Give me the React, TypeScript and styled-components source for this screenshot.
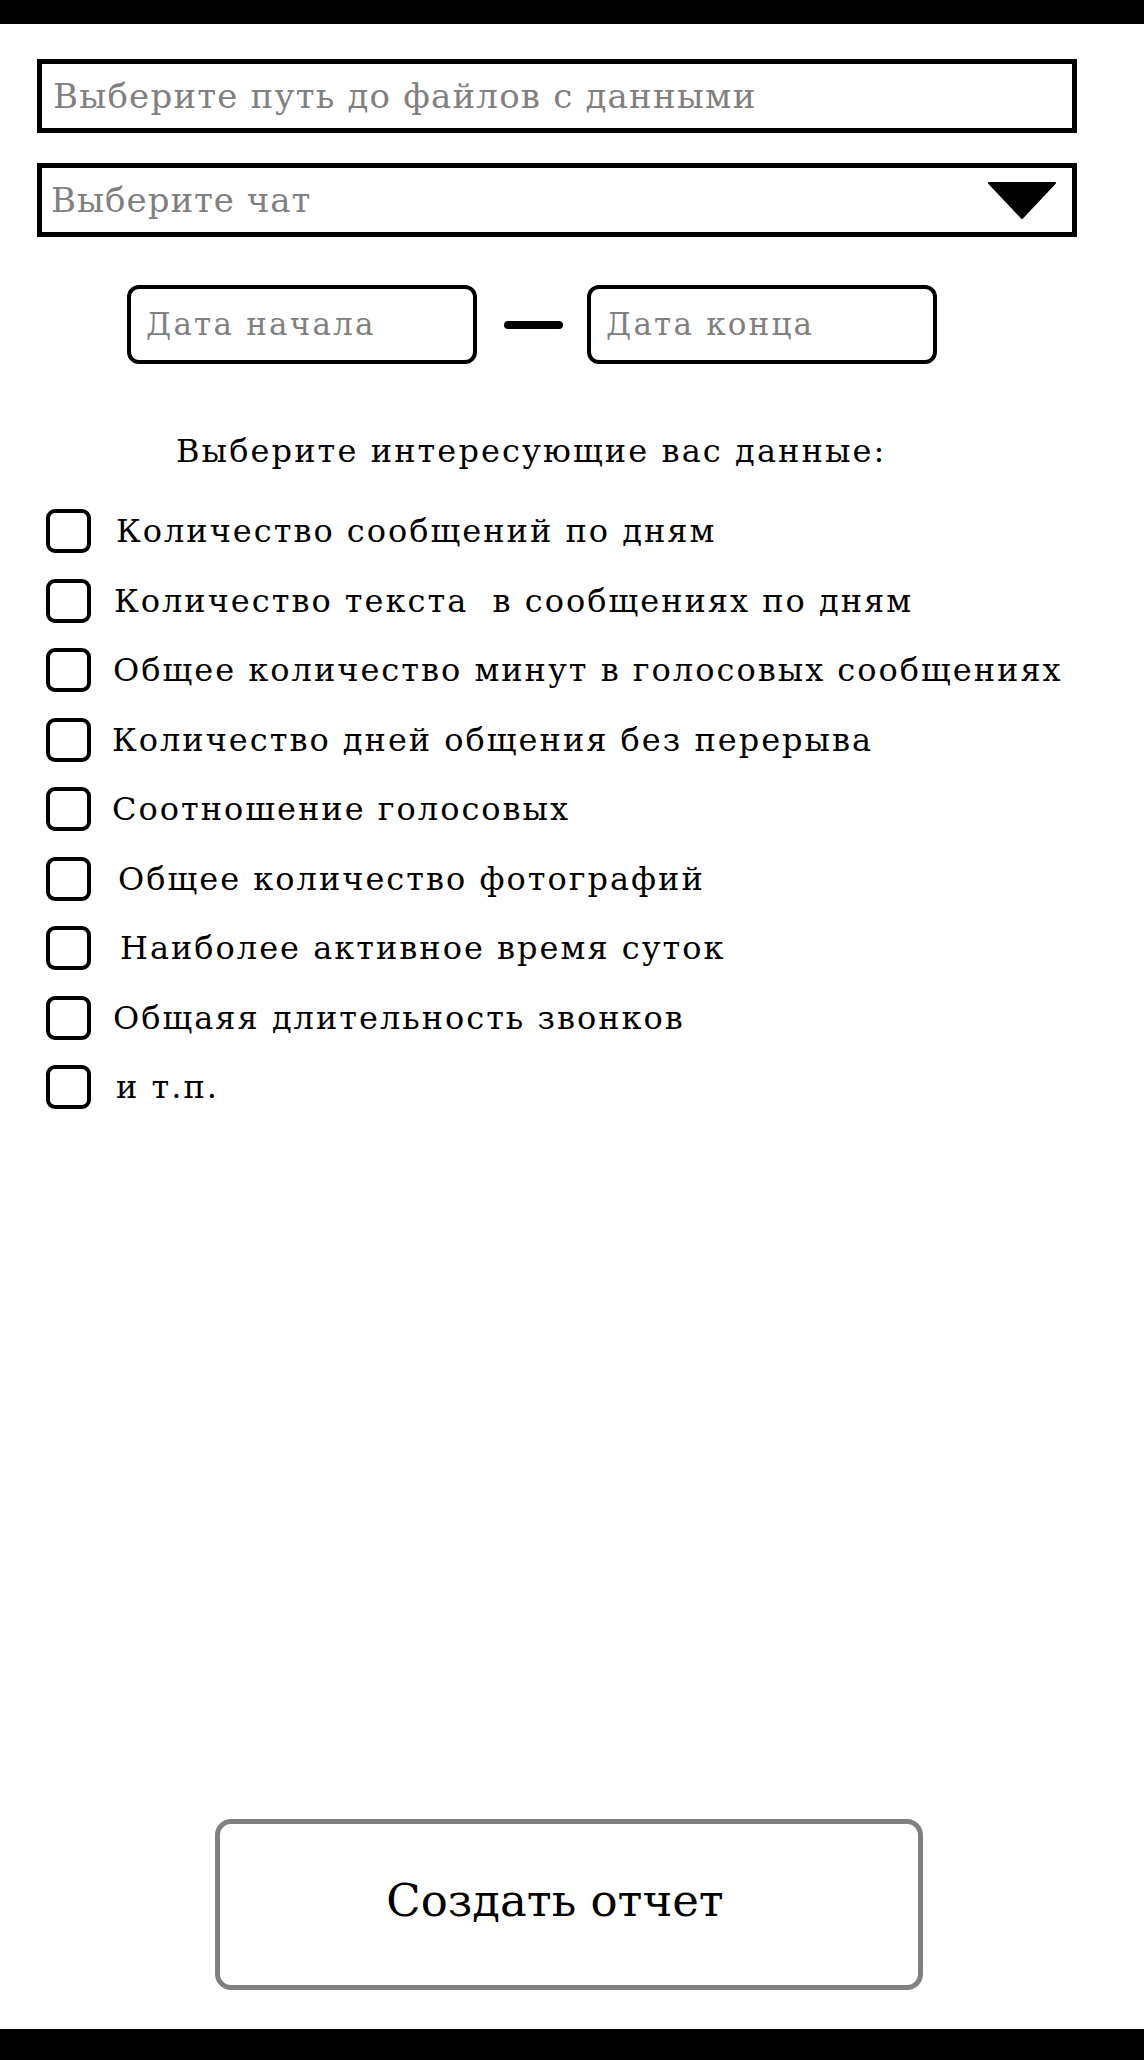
import React from "react";
import styled, { createGlobalStyle } from "styled-components";

const GlobalStyle = createGlobalStyle`
  html, body {
    margin: 0;
    padding: 0;
    background: #ffffff;
  }
  body {
    font-family: "DejaVu Serif", "Liberation Serif", serif;
    color: #000;
  }
  * { box-sizing: border-box; }
`;

const Page = styled.div`
  display: flex;
  flex-direction: column;
  height: 100vh;
`;

const Bar = styled.div<{ $h: number }>`
  flex: 0 0 ${(p) => p.$h}px;
  background: #000;
`;

const Main = styled.main`
  flex: 1;
  display: flex;
  flex-direction: column;
  padding: 35px 67px 0 37px;
`;

const PathInput = styled.input`
  display: block;
  width: 100%;
  height: 74px;
  border: 5px solid #000;
  border-radius: 0;
  padding: 0 11px;
  font-family: "DejaVu Serif", serif;
  font-size: 34px;
  letter-spacing: 1.2px;
  color: #000;
  outline: none;
  &::placeholder {
    color: #808080;
  }
`;

const SelectBox = styled.div`
  margin-top: 30px;
  height: 74px;
  border: 5px solid #000;
  display: flex;
  align-items: center;
  justify-content: space-between;
  padding: 0 16px 0 9px;
`;

const Placeholder = styled.span`
  font-size: 34px;
  letter-spacing: 1px;
  color: #808080;
`;

const DateRow = styled.div`
  margin-top: 48px;
  margin-left: 90px;
  display: flex;
  align-items: center;
`;

const DateInput = styled.input`
  width: 350px;
  height: 79px;
  border: 4px solid #000;
  border-radius: 12px;
  padding: 0 15px 2px;
  font-family: "DejaVu Serif", serif;
  font-size: 31px;
  letter-spacing: 2.2px;
  outline: none;
  &::placeholder {
    color: #808080;
  }
`;

const Dash = styled.span`
  width: 59px;
  height: 8px;
  border-radius: 4px;
  background: #000;
  margin: 0 24px 0 27px;
`;

const Heading = styled.div`
  margin-top: 69px;
  padding-left: 139px;
  font-size: 32px;
  letter-spacing: 2.1px;
  line-height: 36px;
`;

const List = styled.div`
  margin-top: 40px;
  display: flex;
  flex-direction: column;
  gap: 25.5px;
`;

const Row = styled.label<{ $indent: number }>`
  display: flex;
  align-items: center;
  gap: ${(p) => p.$indent}px;
  height: 44px;
  padding-left: 9px;
  font-size: 32px;
  letter-spacing: 2px;
  white-space: pre;
`;

const Box = styled.span`
  flex: 0 0 45px;
  height: 44px;
  border: 4px solid #000;
  border-radius: 9px;
  background: #fff;
`;

const CreateButton = styled.button`
  margin: auto 0 39px 178px;
  width: 708px;
  height: 171px;
  border: 5px solid #808080;
  border-radius: 16px;
  background: #fff;
  padding: 0 28px 8px 0;
  font-family: "DejaVu Serif", serif;
  font-size: 45px;
  color: #000;
  cursor: pointer;
`;

const items: { text: string; indent: number }[] = [
  { text: "Количество сообщений по дням", indent: 25 },
  { text: "Количество текста  в сообщениях по дням", indent: 23 },
  { text: "Общее количество минут в голосовых сообщениях", indent: 22 },
  { text: "Количество дней общения без перерыва", indent: 21 },
  { text: "Соотношение голосовых", indent: 21 },
  { text: "Общее количество фотографий", indent: 27 },
  { text: "Наиболее активное время суток", indent: 29 },
  { text: "Общаяя длительность звонков", indent: 22 },
  { text: "и т.п.", indent: 25 },
];

export default function App() {
  return (
    <Page>
      <GlobalStyle />
      <Bar $h={24} />
      <Main>
        <PathInput placeholder="Выберите путь до файлов с данными" />
        <SelectBox>
          <Placeholder>Выберите чат</Placeholder>
          <svg width="68" height="37" viewBox="0 0 68 37">
            <polygon points="1,1 67,1 34,36" fill="#000" strokeLinejoin="round" stroke="#000" strokeWidth="2" />
          </svg>
        </SelectBox>
        <DateRow>
          <DateInput placeholder="Дата начала" />
          <Dash />
          <DateInput placeholder="Дата конца" />
        </DateRow>
        <Heading>Выберите интересующие вас данные:</Heading>
        <List>
          {items.map((it) => (
            <Row key={it.text} $indent={it.indent}>
              <Box />
              <span>{it.text}</span>
            </Row>
          ))}
        </List>
        <CreateButton>Создать отчет</CreateButton>
      </Main>
      <Bar $h={31} />
    </Page>
  );
}
